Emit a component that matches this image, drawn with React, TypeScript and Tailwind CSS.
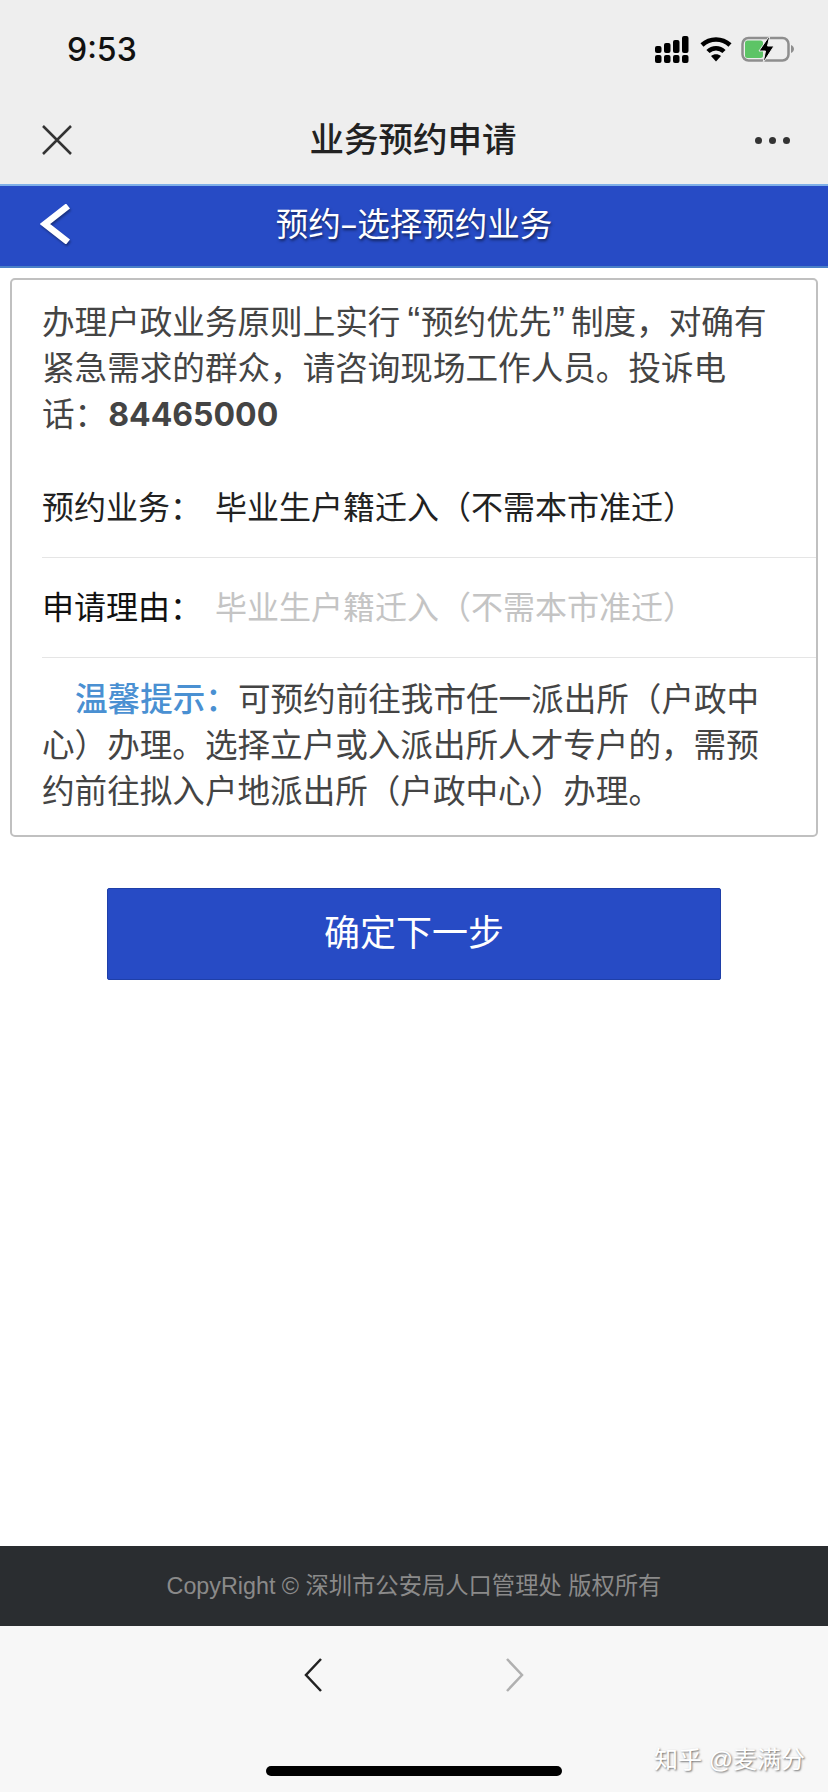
// App.tsx
const tipText = '可预约前往我市任一派出所（户政中心）办理。选择立户或入派出所人才专户的，需预约前往拟入户地派出所（户政中心）办理。';
const bizName = '毕业生户籍迁入（不需本市准迁）';

function SignalIcon() {
  return (
    <svg width="34" height="27" viewBox="0 0 34 27" fill="#000">
      <rect x="0" y="10" width="6.500" height="7" rx="2" />
      <rect x="9" y="7" width="6.500" height="10" rx="2" />
      <rect x="18" y="4" width="6.500" height="13" rx="2" />
      <rect x="27" y="0" width="6.500" height="17" rx="2" />
      <rect x="0" y="19" width="6.500" height="8" rx="2" />
      <rect x="9" y="19" width="6.500" height="8" rx="2" />
      <rect x="18" y="19" width="6.500" height="8" rx="2" />
      <rect x="27" y="19" width="6.500" height="8" rx="2" />
    </svg>
  );
}

function WifiIcon() {
  return (
    <svg width="32" height="26" viewBox="0 0 32 26" fill="none" stroke="#000" strokeWidth="4.500">
      <path d="M2 9 C10 1.500 22 1.500 30 9" />
      <path d="M8 15.500 C12.500 11 19.500 11 24 15.500" />
      <path d="M11 20 L16 25.500 L21 20 C18 17.500 14 17.500 11 20 Z" fill="#000" stroke="none" />
    </svg>
  );
}

function BatteryIcon() {
  return (
    <svg width="54" height="30" viewBox="0 0 54 30">
      <rect x="1.500" y="4" width="46" height="22.500" rx="6" fill="none" stroke="#8e8e8e" strokeWidth="2.500" />
      <path d="M50 11 C52 12 53 13.500 53 15 C53 16.500 52 18 50 19 Z" fill="#8e8e8e" />
      <rect x="4" y="6.500" width="18" height="17.500" rx="2.500" fill="#5dc466" />
      <path d="M29 1 L18 17 L24.500 17 L22 29 L33 12 L26.500 12 Z" fill="#000" stroke="#eeeeee" strokeWidth="1" />
    </svg>
  );
}

export default function App() {
  return (
    <div className="w-[828px] h-[1792px] flex flex-col bg-white overflow-hidden relative font-['Liberation_Sans','Noto_Sans_CJK_SC',sans-serif]">
      {/* status bar */}
      <div className="h-[98px] bg-[#eeeeee] flex items-center justify-between pl-[67px] pr-[33px]">
        <span className="pt-[2px] text-[32px] font-medium text-[#111] leading-none font-['Inter']">9:53</span>
        <div className="flex items-center">
          <SignalIcon />
          <div className="ml-[11px] mr-[9px]">
            <WifiIcon />
          </div>
          <BatteryIcon />
        </div>
      </div>

      {/* wechat nav */}
      <div className="h-[86px] bg-[#eeeeee] grid grid-cols-[1fr_auto_1fr] items-center pl-[36px] pr-[38px] pb-[2px]">
        <svg width="30" height="30" viewBox="0 0 30 30" stroke="#333" strokeWidth="2.500" fill="none" className="ml-[6px]">
          <path d="M1 1 L29 29 M29 1 L1 29" />
        </svg>
        <span className="text-[34.500px] font-medium text-[#222] leading-none">业务预约申请</span>
        <div className="flex justify-end gap-[7px]">
          <span className="w-[7px] h-[7px] rounded-full bg-[#333]" />
          <span className="w-[7px] h-[7px] rounded-full bg-[#333]" />
          <span className="w-[7px] h-[7px] rounded-full bg-[#333]" />
        </div>
      </div>

      {/* page header */}
      <div className="h-[84px] bg-[#274bc5] border-t-2 border-b-2 border-t-[#7fb0e8] border-b-[#4a80c8] grid grid-cols-[1fr_auto_1fr] items-center px-[40px] pb-[3px]">
        <svg width="30" height="40" viewBox="0 0 30 40" fill="none" className="self-start mt-[18px] drop-shadow-[1px_2px_1px_rgba(0,0,0,0.35)]">
          <path d="M28 2 L5 20 L28 38" stroke="#fff" strokeWidth="6.500" />
        </svg>
        <span className="text-[32.500px] text-white leading-none [text-shadow:1px_2px_3px_rgba(0,0,0,0.55)]">
          预约<span className="font-['Noto_Sans']">–</span>选择预约业务
        </span>
      </div>

      {/* form card */}
      <div className="mx-[10px] mt-[10px] border-2 border-[#c0c0c0] rounded-[5px] pt-[20px] pb-[20px] pl-[30px]">
        <p className="pr-[41px] text-[32.600px] leading-[46px] text-[#444]">
          办理户政业务原则上实行<span className="ml-[7px] mr-[1px] text-[38px] leading-none">“</span>预约优先<span className="ml-[1px] mr-[6px] text-[38px] leading-none">”</span>制度，对确有紧急需求的群众，请咨询现场工作人员。投诉电话：<b className="font-bold font-['Inter'] text-[32px] ml-[1px]">84465000</b>
        </p>
        <div className="mt-[20px] h-[100px] flex items-center border-b border-[#e5e5e5] text-[32px]">
          <span className="w-[173px] text-[#222]">预约业务：</span>
          <span className="text-[#222]">{bizName}</span>
        </div>
        <div className="h-[100px] flex items-center border-b border-[#e5e5e5] text-[32px]">
          <span className="w-[173px] text-[#111]">申请理由：</span>
          <span className="text-[#c4c4c4]">{bizName}</span>
        </div>
        <p className="mt-[19px] pr-[41px] text-[32.600px] leading-[46px] text-[#444] indent-[33px]">
          <span className="text-[#4a90d2] font-medium">温馨提示：</span>
          {tipText}
        </p>
      </div>

      <button className="mt-[51px] mx-[107px] h-[92px] bg-[#274bc5] border border-[#1f3fa8] text-white text-[36px] rounded-[2px]">
        确定下一步
      </button>

      {/* footer */}
      <div className="mt-auto h-[80px] bg-[#2a2d30] flex items-center justify-center text-[23.300px] text-[#8a8a8a]">
        CopyRight © 深圳市公安局人口管理处 版权所有
      </div>

      {/* wechat toolbar */}
      <div className="h-[166px] bg-[#f7f7f7] pt-[32px] flex flex-col items-center">
        <div className="flex gap-[184px]">
          <svg width="18" height="34" viewBox="0 0 18 34" fill="none" stroke="#222" strokeWidth="2.500">
            <path d="M17 1 L2 17 L17 33" />
          </svg>
          <svg width="18" height="34" viewBox="0 0 18 34" fill="none" stroke="#b0b0b0" strokeWidth="2.500">
            <path d="M1 1 L16 17 L1 33" />
          </svg>
        </div>
        <div className="mt-[74px] w-[296px] h-[10px] rounded-full bg-black" />
      </div>

      {/* watermark */}
      <span className="absolute left-[654px] top-[1744px] text-[24px] leading-[32px] text-white [text-shadow:1px_1px_2px_rgba(0,0,0,0.55)]">
        知乎 @麦满分
      </span>
    </div>
  );
}
